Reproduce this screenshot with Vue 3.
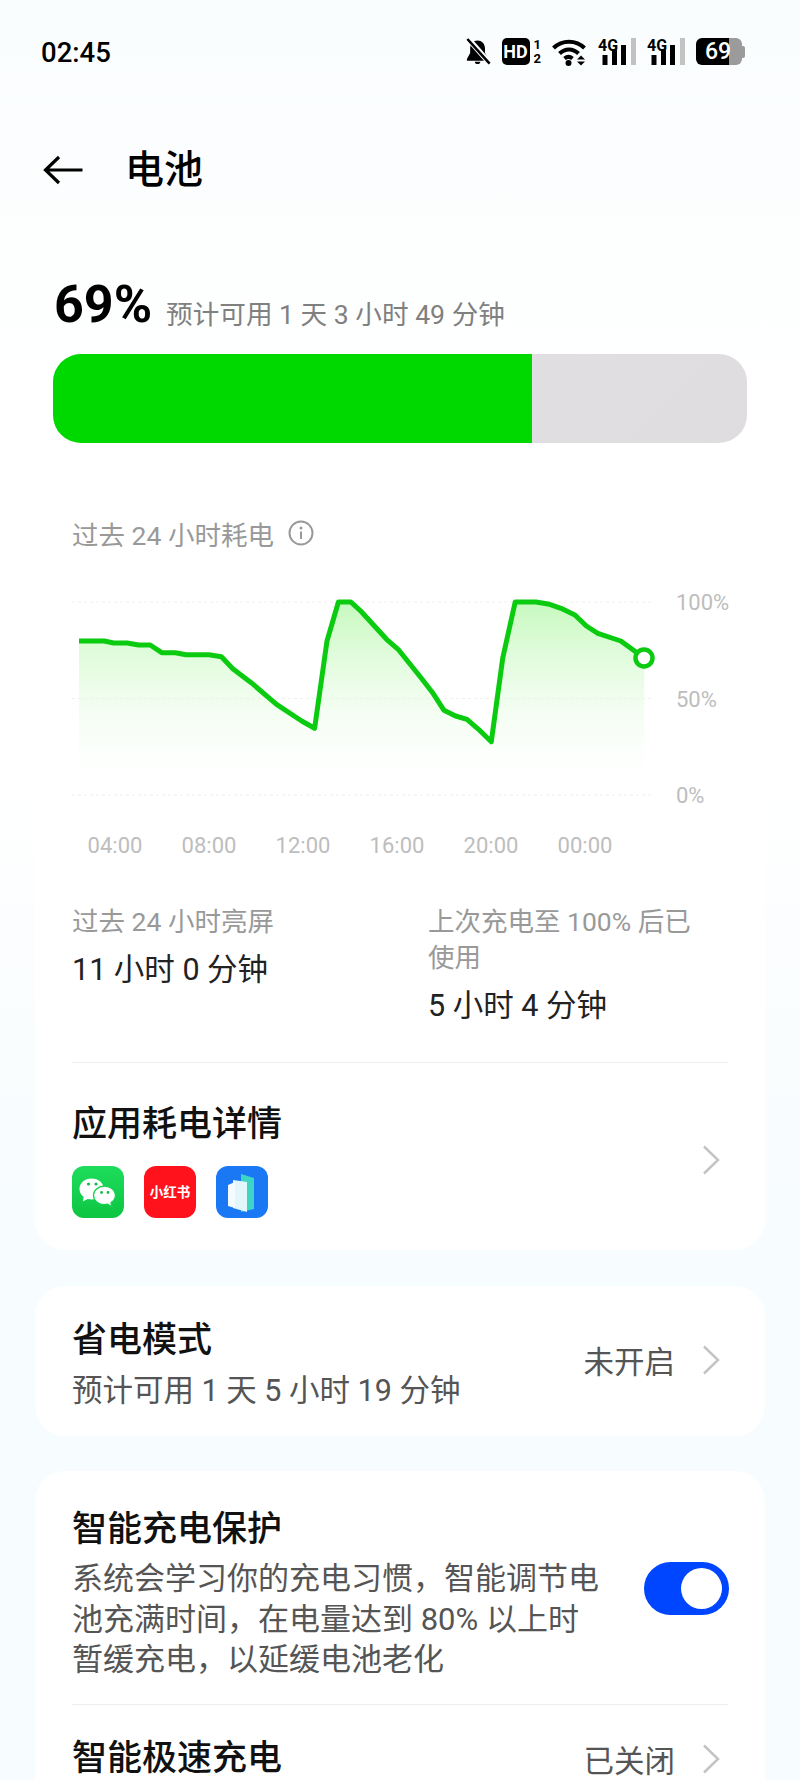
<template>
  <div class="page">
    <div class="status-bar">
      <span class="time">02:45</span>
      <div class="status-icons">
        <svg width="25" height="27" viewBox="0 0 27 28">
          <path d="M12.500 2c-4.500 0-8 3.500-8 8.500V15.500L1 22v2H24v-2L20.500 15.500V10.500C20.500 5.500 17 2 12.500 2z" fill="#000" />
          <path d="M9.500 25h6c0 1.500-1.300 2.500-3 2.500s-3-1-3-2.500z" fill="#000" />
          <path d="M3 1 26 27" stroke="#fbfdfe" stroke-width="6" fill="none" />
          <path d="M1.500 0.500 25.500 27" stroke="#000" stroke-width="2.800" fill="none" />
        </svg>
        <div class="hd">
          <span class="hd-box">HD</span>
          <span class="hd-nums"><i>1</i><i>2</i></span>
        </div>
        <svg width="35" height="28" viewBox="0 0 35 28">
          <path d="M1.500 10C10 1.500 24 1.500 32.500 10M7.500 15.500C13 10 21 10 26.500 15.500M12.500 20.500C15 18.500 18 18.500 20.500 20.500" fill="none" stroke="#000" stroke-width="4" />
          <circle cx="16.500" cy="25" r="3" fill="#000" />
          <path d="M29 17.500 33 21.500H25zM29 27.500 25 23.500H33z" fill="#000" />
        </svg>
        <svg v-for="n in 2" :key="n" class="signal" width="38" height="34" viewBox="0 -6 38 34">
          <text x="0" y="12.500" class="net">4G</text>
          <rect x="4.500" y="17" width="5" height="10" fill="#000" />
          <rect x="14" y="12" width="5" height="15" fill="#000" />
          <rect x="23" y="7" width="5" height="20" fill="#000" />
          <rect x="33" y="0" width="5" height="27" fill="#c2c2c2" />
        </svg>
        <div class="battery">
          <span class="bat-num">69</span>
          <span class="bat-cap"></span>
        </div>
      </div>
    </div>

    <div class="title-bar">
      <svg width="40" height="30" viewBox="0 0 40 30">
        <path d="M39.500 15H3M16 2 2.500 15 16 28" fill="none" stroke="#000" stroke-width="3.200" />
      </svg>
      <h1>电池</h1>
    </div>

    <div class="level">
      <span class="percent">69%</span>
      <span class="estimate">预计可用 1 天 3 小时 49 分钟</span>
    </div>
    <div class="bar"><div class="bar-fill" :style="{ width: level + '%' }"></div></div>

    <div class="card usage">
      <div class="usage-head">
        <span>过去 24 小时耗电</span>
        <svg width="26" height="26" viewBox="0 0 26 26">
          <circle cx="13" cy="13" r="11.500" fill="none" stroke="#999" stroke-width="2" />
          <circle cx="13" cy="8" r="1.500" fill="#999" />
          <path d="M13 11.500V19" stroke="#999" stroke-width="2" fill="none" />
        </svg>
      </div>

      <svg class="chart" width="730" height="275" viewBox="0 0 730 275">
        <defs>
          <linearGradient id="chartFill" x1="0" y1="11" x2="0" y2="200" gradientUnits="userSpaceOnUse">
            <stop offset="0" stop-color="#c6f9be" />
            <stop offset="1" stop-color="#ffffff" stop-opacity="0.1" />
          </linearGradient>
        </defs>
        <line v-for="y in gridLines" :key="y" x1="37" x2="617" :y1="y" :y2="y" class="grid" />
        <path :d="areaPath" fill="url(#chartFill)" />
        <polyline :points="linePoints" fill="none" stroke="#0bcb10" stroke-width="5" stroke-linejoin="round" />
        <circle cx="609" cy="67" r="8.500" fill="#fff" stroke="#0bcb10" stroke-width="4.500" />
        <text v-for="l in yLabels" :key="l.text" x="641" :y="l.y" class="axis">{{ l.text }}</text>
        <text v-for="l in xLabels" :key="l.text" :x="l.x" y="262" text-anchor="middle" class="axis">{{ l.text }}</text>
      </svg>

      <div class="stats">
        <div class="stat">
          <div class="stat-label">过去 24 小时亮屏</div>
          <div class="stat-value">11 小时 0 分钟</div>
        </div>
        <div class="stat">
          <div class="stat-label">上次充电至 100% 后已使用</div>
          <div class="stat-value">5 小时 4 分钟</div>
        </div>
      </div>

      <div class="app-row">
        <div>
          <div class="row-title">应用耗电详情</div>
          <div class="apps">
            <svg class="app" width="52" height="52" viewBox="0 0 52 52">
              <defs>
                <linearGradient id="wechatBg" x1="0" y1="0" x2="0" y2="1">
                  <stop offset="0" stop-color="#1edd5c" />
                  <stop offset="1" stop-color="#0cc541" />
                </linearGradient>
              </defs>
              <rect width="52" height="52" rx="12" fill="url(#wechatBg)" />
              <path d="M19.500 12.500C12.500 12.500 7.500 17 7.500 23c0 3.300 1.600 6 4.200 8L10.800 35.500l5-2.600c1.200.3 2.400.5 3.700.5C26.500 33.400 31.700 29 31.700 23S26.500 12.500 19.500 12.500z" fill="#fff" />
              <path d="M32.500 20C26.500 20 21.500 24 21.500 29.300S26.500 38.600 32.500 38.600c1.100 0 2.100-.2 3-.4L39.800 40.500 39 36.600C41.800 35 43.500 32.300 43.500 29.300 43.500 24 38.500 20 32.500 20z" fill="#fff" stroke="#17d253" stroke-width="1.300" />
              <circle cx="16.500" cy="18" r="1.600" fill="#17b94c" />
              <circle cx="24" cy="18" r="1.600" fill="#17b94c" />
              <circle cx="29.500" cy="26.500" r="1.400" fill="#17b94c" />
              <circle cx="36" cy="26.500" r="1.400" fill="#17b94c" />
            </svg>
            <div class="app xhs">小红书</div>
            <svg class="app" width="52" height="52" viewBox="0 0 52 52">
              <rect width="52" height="52" rx="12" fill="#1a78f5" />
              <path d="M25 8 38 12V43L25 46z" fill="#3dd6c4" />
              <path d="M17 14 31 16V46L17 42z" fill="#e2f6fb" />
              <path d="M12 19 19 16V42L12 40z" fill="#f5fcff" />
            </svg>
          </div>
        </div>
        <svg class="chev" width="18" height="30" viewBox="0 0 18 30">
          <path d="M2 1.500 16 15 2 28.500" />
        </svg>
      </div>
    </div>

    <div class="card saver">
      <div>
        <div class="row-title">省电模式</div>
        <div class="row-sub">预计可用 1 天 5 小时 19 分钟</div>
      </div>
      <div class="row-end">
        <span>未开启</span>
        <svg class="chev" width="18" height="30" viewBox="0 0 18 30">
          <path d="M2 1.500 16 15 2 28.500" />
        </svg>
      </div>
    </div>

    <div class="card charge">
      <div class="protect">
        <div class="protect-text">
          <div class="row-title">智能充电保护</div>
          <div class="protect-desc">系统会学习你的充电习惯，智能调节电池充满时间，在电量达到 80% 以上时暂缓充电，以延缓电池老化</div>
        </div>
        <div class="toggle"><span class="knob"></span></div>
      </div>
      <div class="fast">
        <div class="row-title">智能极速充电</div>
        <div class="row-end">
          <span>已关闭</span>
          <svg class="chev" width="18" height="30" viewBox="0 0 18 30">
            <path d="M2 1.500 16 15 2 28.500" />
          </svg>
        </div>
      </div>
    </div>
  </div>
</template>

<script setup>
import { computed } from 'vue'

const level = 69

const gridLines = [11, 107.5, 204]

const yLabels = [
  { text: '100%', y: 19 },
  { text: '50%', y: 116 },
  { text: '0%', y: 212 }
]

const xLabels = [
  { text: '04:00', x: 80 },
  { text: '08:00', x: 174 },
  { text: '12:00', x: 268 },
  { text: '16:00', x: 362 },
  { text: '20:00', x: 456 },
  { text: '00:00', x: 550 }
]

const points = [
  [44, 50], [69.3, 50], [78.5, 52], [92.2, 52], [103.7, 54], [115.2, 54], [126.7, 61.7], [140.4, 61.7],
  [151, 63.7], [174, 63.7], [186.4, 65.7], [197.8, 77.7], [216.2, 91.7], [241.5, 113.3], [266.7, 130],
  [279.6, 137.3], [292, 50], [303.4, 11], [315.8, 11], [326.4, 20.7], [351.6, 48.3], [363.1, 58.3],
  [386, 86.7], [397.6, 101.7], [409, 119.3], [420.5, 125], [432, 128.3], [443.5, 138.3], [456.3, 150.7],
  [467.8, 66.7], [480.2, 11], [500.9, 11], [514.6, 13.3], [526, 17.3], [539.9, 24], [551.4, 35],
  [562.8, 42.3], [585.8, 50], [599.6, 60], [609.2, 67.3]
]

const linePoints = computed(() => points.map((p) => p.join(',')).join(' '))
const areaPath = computed(() => `M44,204 L${linePoints.value.replace(/ /g, ' L')} L609.2,204 Z`)
</script>

<style>
html, body {
  margin: 0;
  background: #f7fcfe;
}
</style>

<style scoped>
.page {
  width: 800px;
  height: 1780px;
  overflow: hidden;
  box-sizing: border-box;
  background: linear-gradient(180deg, #fafdfe 0, #fdfefe 250px, #fff 420px, #fff 760px, #fafdfe 1050px, #f7fcfe 1300px);
  font-family: Roboto, "Noto Sans CJK SC", sans-serif;
  color: #000;
}

.status-bar {
  height: 104px;
  padding: 38px 55px 0 41px;
  box-sizing: border-box;
  display: flex;
  justify-content: space-between;
  align-items: flex-start;
}

.time {
  font-size: 27.500px;
  line-height: 30px;
  font-weight: 500;
}

.status-icons {
  display: flex;
  align-items: flex-start;
  gap: 11px;
}

.signal {
  margin-top: -6px;
}

.hd {
  display: flex;
  gap: 4px;
}

.hd-box {
  width: 28px;
  height: 27px;
  background: #000;
  color: #fff;
  border-radius: 5px;
  font-size: 18px;
  line-height: 27px;
  font-weight: 700;
  text-align: center;
}

.hd-nums {
  display: flex;
  flex-direction: column;
  font-size: 13px;
  line-height: 14px;
  font-weight: 700;
}

.hd-nums i {
  font-style: normal;
}

.net {
  font-size: 16px;
  font-weight: 700;
  font-family: Roboto, sans-serif;
}

.battery {
  display: flex;
  align-items: center;
  width: 49px;
  height: 27px;
}

.bat-num {
  width: 46px;
  height: 27px;
  border-radius: 6px;
  color: #fff;
  font-size: 23px;
  line-height: 27px;
  font-weight: 500;
  padding-left: 9px;
  box-sizing: border-box;
  background: linear-gradient(90deg, #000 72%, #9b9b9b 72%);
}

.bat-cap {
  width: 3px;
  height: 12px;
  background: #9b9b9b;
  border-radius: 0 2px 2px 0;
}

.title-bar {
  display: flex;
  align-items: center;
  gap: 42px;
  padding-left: 43px;
  height: 60px;
  margin-top: 36px;
}

.title-bar h1 {
  margin: 0;
  font-size: 39px;
  line-height: 60px;
  font-weight: 500;
}

.level {
  display: flex;
  align-items: flex-start;
  gap: 14px;
  padding-left: 54px;
  margin-top: 75px;
  height: 60px;
}

.percent {
  font-size: 52px;
  line-height: 60px;
  font-weight: 700;
}

.estimate {
  font-size: 26.600px;
  line-height: 36px;
  margin-top: 22px;
  color: #808080;
}

.bar {
  margin: 19px 53px 0;
  height: 89px;
  border-radius: 28px;
  overflow: hidden;
  background: linear-gradient(135deg, #e6e3e6, #dfdcdf);
}

.bar-fill {
  height: 100%;
  background: #00d900;
}

.card {
  width: 730px;
  margin: 0 35px;
  background: #fff;
  border-radius: 30px;
  box-sizing: border-box;
}

.usage {
  margin-top: 35px;
  height: 772px;
  padding-top: 35px;
}

.usage-head {
  display: flex;
  align-items: center;
  gap: 14px;
  padding-left: 37px;
  height: 40px;
  font-size: 26.500px;
  color: #999;
}

.chart {
  display: block;
  margin-top: 38px;
}

.axis {
  font-size: 22px;
  fill: #bdbdbd;
}

.grid {
  stroke: #efefef;
  stroke-width: 1;
  stroke-dasharray: 3 3;
}

.stats {
  display: grid;
  grid-template-columns: 356px 280px;
  margin: 0 37px;
  padding-top: 38px;
  height: 197px;
  box-sizing: border-box;
  border-bottom: 1px solid #eee;
}

.stat-label {
  font-size: 26.500px;
  line-height: 36px;
  color: #999;
}

.stat-value {
  font-size: 30.500px;
  line-height: 36px;
  margin-top: 12px;
  color: #222;
}

.app-row {
  display: flex;
  justify-content: space-between;
  align-items: center;
  padding: 38px 45px 0 37px;
}

.row-title {
  font-size: 35px;
  line-height: 48px;
  font-weight: 500;
  color: #111;
}

.apps {
  display: flex;
  gap: 20px;
  margin-top: 17px;
}

.app {
  display: block;
}

.xhs {
  width: 52px;
  height: 52px;
  border-radius: 12px;
  background: #ff121c;
  color: #fff;
  font-size: 13.500px;
  font-weight: 700;
  line-height: 52px;
  text-align: center;
}

.chev path {
  fill: none;
  stroke: #c4c4c4;
  stroke-width: 2.500;
}

.saver {
  margin-top: 36px;
  height: 150px;
  padding: 31px 45px 0 37px;
  display: flex;
  justify-content: space-between;
  align-items: flex-start;
}

.saver .row-end {
  margin-top: 21px;
}

.row-sub {
  font-size: 30.500px;
  line-height: 40px;
  color: #555;
  margin-top: 6px;
}

.row-end {
  display: flex;
  align-items: center;
  gap: 27px;
  font-size: 30.500px;
  color: #555;
}

.charge {
  margin-top: 35px;
  height: 400px;
  padding: 35px 37px 0;
}

.protect {
  display: flex;
  justify-content: space-between;
  align-items: flex-start;
  height: 198px;
  border-bottom: 1px solid #eee;
}

.protect-text {
  width: 530px;
}

.protect-desc {
  font-size: 31px;
  line-height: 40.500px;
  color: #555;
  margin-top: 5px;
}

.toggle {
  width: 85px;
  height: 53px;
  border-radius: 27px;
  background: #0045ff;
  position: relative;
  margin: 56px -1px 0 0;
}

.knob {
  position: absolute;
  top: 6px;
  right: 7px;
  width: 41px;
  height: 41px;
  border-radius: 50%;
  background: #fff;
}

.fast {
  display: flex;
  justify-content: space-between;
  align-items: center;
  padding: 33px 8px 0 0;
}

.fast .row-title {
  line-height: 42px;
}

.fast .row-end {
  height: 42px;
  margin-bottom: 0;
}
</style>
